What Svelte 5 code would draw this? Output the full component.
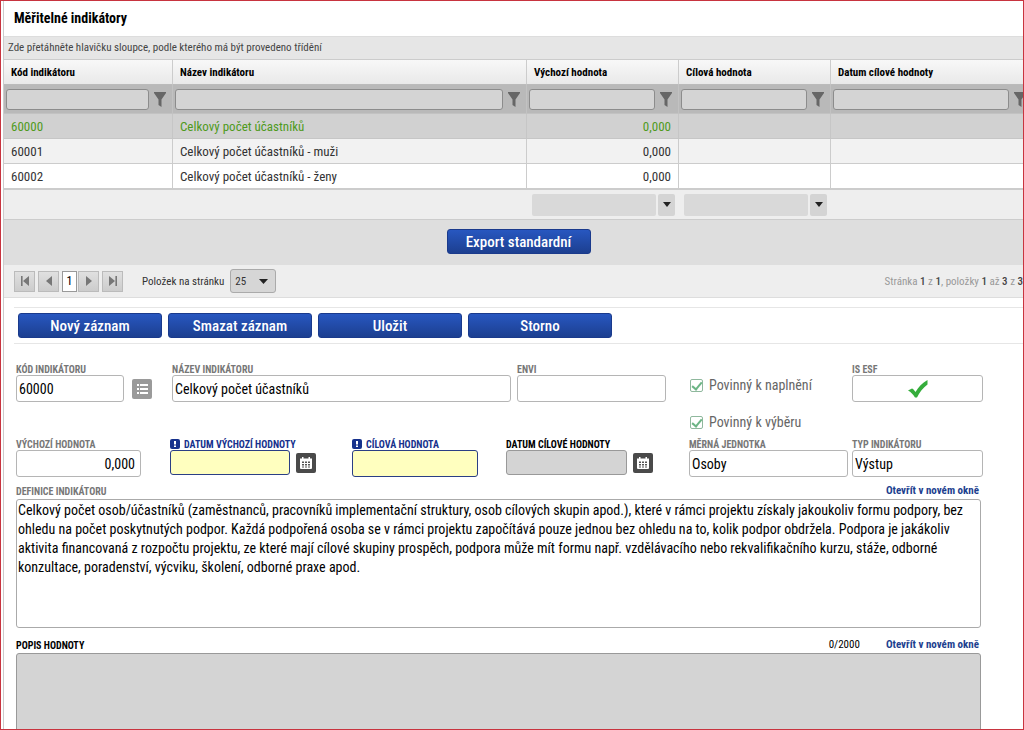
<script lang="ts">
  interface Indicator {
    code: string;
    name: string;
    initial: string;
  }

  const columns = ["Kód indikátoru", "Název indikátoru", "Výchozí hodnota", "Cílová hodnota", "Datum cílové hodnoty"];

  const rows: Indicator[] = [
    { code: "60000", name: "Celkový počet účastníků", initial: "0,000" },
    { code: "60001", name: "Celkový počet účastníků - muži", initial: "0,000" },
    { code: "60002", name: "Celkový počet účastníků - ženy", initial: "0,000" },
  ];

  const actions = ["Nový záznam", "Smazat záznam", "Uložit", "Storno"];

  let selected = "60000";
  let note = "";
  let definition =
    "Celkový počet osob/účastníků (zaměstnanců, pracovníků implementační struktury, osob cílových skupin apod.), které v rámci projektu získaly jakoukoliv formu podpory, bez ohledu na počet poskytnutých podpor. Každá podpořená osoba se v rámci projektu započítává pouze jednou bez ohledu na to, kolik podpor obdržela. Podpora je jakákoliv aktivita financovaná z rozpočtu projektu, ze které mají cílové skupiny prospěch, podpora může mít formu např. vzdělávacího nebo rekvalifikačního kurzu, stáže, odborné konzultace, poradenství, výcviku, školení, odborné praxe apod.";

  $: current = rows.find(r => r.code === selected) ?? rows[0];
</script>

{#snippet calendar()}
  <svg width="12" height="12" viewBox="0 0 12 12" aria-hidden="true">
    <path d="M0 1.500h2V0h1.500v1.500h5V0H10v1.500h2V11q0 1-1 1H1q-1 0-1-1z" fill="#fff" />
    <path d="M2 4.500h2v1.500H2zM5 4.500h2v1.500H5zM8 4.500h2v1.500H8zM2 7h2v1.500H2zM5 7h2v1.500H5zM8 7h2v1.500H8zM2 9.500h2v1H2zM5 9.500h2v1H5zM8 9.500h2v1H8z" fill="#555" />
  </svg>
{/snippet}

{#snippet required()}
  <svg width="10" height="10" viewBox="0 0 10 10" aria-hidden="true">
    <rect width="10" height="10" rx="2" fill="#16318c" />
    <path d="M4 2h2v3.500H4zM4 6.500h2v1.500H4z" fill="#fff" />
  </svg>
{/snippet}

<div class="page">
  <main>
    <h1>Měřitelné indikátory</h1>
    <div class="group-bar">Zde přetáhněte hlavičku sloupce, podle kterého má být provedeno třídění</div>

    <table>
      <colgroup>
        <col class="code" />
        <col />
        <col class="value" />
        <col class="value" />
        <col class="date" />
      </colgroup>
      <thead>
        <tr>
          {#each columns as column}
            <th>{column}</th>
          {/each}
        </tr>
        <tr class="filters">
          {#each columns as column}
            <td>
              <div class="filter">
                <input type="text" aria-label={"Filtr: " + column} />
                <button aria-label={"Filtrovat: " + column}>
                  <svg width="12" height="15" viewBox="0 0 12 15"><path d="M0 0h12v1L7.500 7.500V15l-3-2V7.500L0 1z" fill="#666" /></svg>
                </button>
              </div>
            </td>
          {/each}
        </tr>
      </thead>
      <tbody>
        {#each rows as row}
          <tr class:selected={selected === row.code} on:click={() => selected = row.code}>
            <td>{row.code}</td>
            <td>{row.name}</td>
            <td class="num">{row.initial}</td>
            <td></td>
            <td></td>
          </tr>
        {/each}
      </tbody>
      <tfoot>
        <tr>
          <td></td>
          <td></td>
          {#each ["Výchozí hodnota", "Cílová hodnota"] as name}
            <td>
              <div class="combo">
                <input type="text" aria-label={"Souhrn: " + name} />
                <button aria-label={"Vybrat souhrn: " + name}>
                  <svg width="8" height="5" viewBox="0 0 8 5"><path d="M0 0h8L4 5z" fill="#222" /></svg>
                </button>
              </div>
            </td>
          {/each}
          <td></td>
        </tr>
      </tfoot>
    </table>

    <div class="export"><button class="primary">Export standardní</button></div>

    <div class="pager">
      <button class="nav" aria-label="První stránka">
        <svg width="10" height="10" viewBox="0 0 10 10"><path d="M1 0h1.600v10H1zM9 0v10L3 5z" fill="#777" /></svg>
      </button>
      <button class="nav" aria-label="Předchozí stránka">
        <svg width="10" height="10" viewBox="0 0 10 10"><path d="M8 0v10L2 5z" fill="#777" /></svg>
      </button>
      <button class="number">1</button>
      <button class="nav" aria-label="Další stránka">
        <svg width="10" height="10" viewBox="0 0 10 10"><path d="M2 0v10l6-5z" fill="#777" /></svg>
      </button>
      <button class="nav" aria-label="Poslední stránka">
        <svg width="10" height="10" viewBox="0 0 10 10"><path d="M7.400 0H9v10H7.400zM1 0v10l6-5z" fill="#777" /></svg>
      </button>
      <label for="page-size">Položek na stránku</label>
      <div class="select">
        <select id="page-size">
          <option>25</option>
          <option>50</option>
          <option>100</option>
        </select>
        <svg width="9" height="5" viewBox="0 0 9 5"><path d="M0 0h9L4.500 5z" fill="#222" /></svg>
      </div>
      <p>Stránka <b>1</b> z <b>1</b>, položky <b>1</b> až <b>3</b> z <b>3</b></p>
    </div>

    <div class="toolbar">
      {#each actions as action}
        <button class="primary">{action}</button>
      {/each}
    </div>

    <form on:submit|preventDefault>
      <div class="row first">
        <div class="field">
          <label for="code">Kód indikátoru</label>
          <div class="with-icon wide">
            <input id="code" type="text" value={current.code} />
            <button class="icon list" type="button" aria-label="Vybrat ze seznamu">
              <svg width="11" height="10" viewBox="0 0 11 10"><path d="M0 0h2v2H0zM3 0h8v2H3zM0 4h2v2H0zM3 4h8v2H3zM0 8h2v2H0zM3 8h8v2H3z" fill="#fff" /></svg>
            </button>
          </div>
        </div>
        <div class="field gap">
          <label for="name">Název indikátoru</label>
          <input id="name" type="text" value={current.name} />
        </div>
        <div class="field envi">
          <label for="envi">ENVI</label>
          <input id="envi" type="text" />
        </div>
        <div class="checks">
          <label><input type="checkbox" checked disabled /> Povinný k naplnění</label>
          <label><input type="checkbox" checked disabled /> Povinný k výběru</label>
        </div>
        <div class="field">
          <span class="label">Is ESF</span>
          <div class="flag" role="img" aria-label="Ano">
            <svg width="22" height="20" viewBox="0 0 22 20"><path d="M1 11.500L5 9.500c1.500.5 2.500 2 3.500 3.500C11.500 8 15 4 20.500 1v4.500C16 9 12.500 13 10 18.500H8C6 15.500 4 13 1 11.500z" fill="#35ad3b" /></svg>
          </div>
        </div>
      </div>

      <div class="row second">
        <div class="field initial">
          <label for="initial">Výchozí hodnota</label>
          <input id="initial" class="num" type="text" value={current.initial} />
        </div>
        <div class="field required">
          <label for="initial-date">{@render required()}Datum výchozí hodnoty</label>
          <div class="with-icon">
            <input id="initial-date" type="text" />
            <button class="icon" type="button" aria-label="Vybrat datum výchozí hodnoty">{@render calendar()}</button>
          </div>
        </div>
        <div class="field required target">
          <label for="target">{@render required()}Cílová hodnota</label>
          <input id="target" type="text" />
        </div>
        <div class="field optional">
          <label for="target-date">Datum cílové hodnoty</label>
          <div class="with-icon">
            <input id="target-date" type="text" />
            <button class="icon" type="button" aria-label="Vybrat datum cílové hodnoty">{@render calendar()}</button>
          </div>
        </div>
        <div class="field unit">
          <label for="unit">Měrná jednotka</label>
          <input id="unit" type="text" value="Osoby" />
        </div>
        <div class="field">
          <label for="type">Typ indikátoru</label>
          <input id="type" type="text" value="Výstup" />
        </div>
      </div>

      <div class="area">
        <div class="area-head">
          <label for="definition">Definice indikátoru</label>
          <a href="#definition">Otevřít v novém okně</a>
        </div>
        <textarea id="definition" bind:value={definition}></textarea>
      </div>

      <div class="area optional">
        <div class="area-head">
          <label for="note">Popis hodnoty</label>
          <span>{note.length}/2000</span>
          <a href="#note">Otevřít v novém okně</a>
        </div>
        <textarea id="note" maxlength="2000" bind:value={note}></textarea>
      </div>
    </form>
  </main>
</div>

<style>
  :global(body) {
    background: #fff;
  }

  .page {
    box-sizing: border-box;
    height: 100vh;
    overflow: hidden;
    border: 1px solid #c8343f;
    padding-left: 2px;
    font-family: "Roboto Condensed", Roboto, sans-serif;
    font-size: 14px;
    color: #333;
  }

  .page :global(*) {
    box-sizing: border-box;
  }

  /* the grid runs a little past the right edge of the frame */
  main {
    width: calc(100% + 10px);
    border-left: 1px solid #ccc;
  }

  input, button, select, textarea {
    font: inherit;
    color: #000;
    margin: 0;
    min-width: 0;
  }

  button {
    padding: 0;
    border: none;
    background: none;
    cursor: pointer;
  }

  svg {
    flex: none;
  }

  h1 {
    margin: 0;
    padding: 0 10px;
    font-size: 14px;
    line-height: 35px;
    color: #000;
  }

  .group-bar {
    padding: 0 4px;
    border-top: 1px solid #ddd;
    background: #e6e6e6;
    font-size: 11px;
    line-height: 22px;
    color: #444;
  }

  table {
    width: 100%;
    table-layout: fixed;
    border-collapse: separate;
    border-spacing: 0;
    font-size: 13px;
  }

  .code {
    width: 169px;
  }

  .value {
    width: 152px;
  }

  .date {
    width: 202px;
  }

  th {
    height: 26px;
    padding: 0 7px;
    border-top: 1px solid #ccc;
    border-right: 1px solid #ccc;
    border-bottom: 1px solid #bbb;
    background: linear-gradient(#f8f8f8, #e9e9e9);
    font-size: 11px;
    text-align: left;
    color: #000;
  }

  td {
    height: 25px;
    padding: 0 7px;
    border-right: 1px solid #ccc;
    border-bottom: 1px solid #ccc;
    white-space: nowrap;
  }

  .filters td {
    height: 29px;
    padding: 0 2px;
    border-color: #c2c2c2;
    background: #b9b9b9;
  }

  .filter {
    display: flex;
    align-items: center;
    gap: 5px;
    padding-right: 4px;
  }

  .filter input {
    flex: 1;
    height: 21px;
    border: 1px solid #8c8c8c;
    border-radius: 3px;
    background: #d4d4d4;
  }

  .filter button {
    display: flex;
  }

  tbody tr:nth-child(even) {
    background: #f2f2f2;
  }

  tbody .selected {
    background: #d1d1d1;
    color: #4f9a1c;
  }

  .selected td {
    border-color: #c6c6c6;
  }

  tbody tr:last-child td {
    height: 26px;
    border-bottom: 2px solid #ccc;
  }

  .num {
    text-align: right;
  }

  tfoot td {
    height: 30px;
    padding: 0 4px 0 5px;
    border-right: none;
    background: #eee;
  }

  .combo {
    display: flex;
    gap: 2px;
  }

  .combo input {
    flex: 1;
    height: 22px;
    border: none;
    border-radius: 2px;
    background: #d9d9d9;
  }

  .combo button {
    display: flex;
    align-items: center;
    justify-content: center;
    width: 17px;
    border-radius: 2px;
    background: #d4d4d4;
  }

  .export {
    display: flex;
    justify-content: center;
    padding: 9px 0 11px;
    background: #dedede;
  }

  .primary {
    width: 144px;
    height: 25px;
    border: 1px solid #1a3a8c;
    border-radius: 3px;
    background: linear-gradient(#2857c0, #1c3f90);
    color: #fff;
    font-size: 15px;
    font-weight: 500;
  }

  .pager {
    display: flex;
    align-items: center;
    height: 33px;
    padding: 0 10px;
    border-bottom: 1px solid #ddd;
    background: #eee;
    font-size: 11px;
    white-space: nowrap;
  }

  .nav {
    display: flex;
    align-items: center;
    justify-content: center;
    width: 21px;
    height: 21px;
    margin-right: 3px;
    border: 1px solid #bbb;
    background: linear-gradient(#e0e0e0, #ccc);
  }

  .number {
    width: 15px;
    height: 21px;
    margin-right: 1px;
    border: 1px solid #999;
    background: #fff;
    font-size: 12px;
  }

  .pager label {
    padding: 0 6px 0 16px;
  }

  .select {
    display: flex;
    align-items: center;
    width: 46px;
    height: 24px;
    border: 1px solid #aaa;
    border-radius: 3px;
    background: #d6d6d6;
  }

  .select select {
    width: 100%;
    height: 100%;
    padding: 0 4px;
    border: none;
    appearance: none;
    background: none;
    color: #333;
  }

  .select svg {
    margin-right: 7px;
    pointer-events: none;
  }

  .pager p {
    margin: 0 0 0 auto;
    color: #999;
  }

  .pager b {
    font-weight: 500;
    color: #444;
  }

  .toolbar {
    display: flex;
    gap: 6px;
    margin: 9px 0 0 10px;
    padding: 5px 4px;
    border-top: 1px solid #e6e6e6;
    border-bottom: 1px solid #e6e6e6;
  }

  form {
    padding: 19px 50px 0 12px;
  }

  .row {
    display: grid;
    height: 75px;
  }

  .first {
    grid-template-columns: 156fr 345fr 173fr 162fr 131fr;
  }

  .second {
    grid-template-columns: 154fr 182fr 154fr 183fr 163fr 131fr;
    height: 48px;
  }

  .field label, .field .label, .area-head label {
    display: flex;
    align-items: center;
    gap: 4px;
    height: 12px;
    font-size: 10px;
    font-weight: 700;
    text-transform: uppercase;
    white-space: nowrap;
    color: #777;
  }

  .field input {
    display: block;
    width: 100%;
    height: 27px;
    padding: 0 2px;
    border: 1px solid #b5b5b5;
    border-radius: 3px;
    background: #fff;
  }

  .field .num {
    padding-right: 5px;
  }

  .gap {
    padding-right: 6px;
  }

  .envi {
    padding-right: 24px;
  }

  .initial {
    padding-right: 29px;
  }

  .target {
    padding-right: 28px;
  }

  .unit {
    padding-right: 4px;
  }

  .with-icon {
    display: flex;
    align-items: center;
    gap: 6px;
    padding-right: 36px;
  }

  .wide {
    gap: 8px;
    padding-right: 20px;
  }

  .field .with-icon input {
    flex: 1;
    height: 25px;
  }

  .field .wide input {
    height: 27px;
  }

  .icon {
    display: flex;
    align-items: center;
    justify-content: center;
    width: 20px;
    height: 20px;
    border-radius: 2px;
    background: #4a4a4a;
  }

  .list {
    background: #9a9a9a;
  }

  .field.required label {
    color: #16318c;
  }

  .field.required input {
    border-color: #2b3f85;
    background: #ffffbf;
  }

  .optional input, .optional textarea {
    border-color: #999;
    background: #d4d4d4;
  }

  .field.optional label, .optional .area-head label {
    color: #000;
  }

  .checks {
    display: flex;
    flex-direction: column;
    gap: 17px;
    padding-top: 12px;
    color: #666;
  }

  .checks label {
    display: flex;
    align-items: center;
    gap: 6px;
    height: 20px;
    white-space: nowrap;
  }

  .checks input {
    display: flex;
    justify-content: center;
    width: 13px;
    height: 13px;
    border: 1px solid #8fb89d;
    border-radius: 2px;
    appearance: none;
    background: #fff;
  }

  .checks input:checked::after {
    content: "";
    width: 4px;
    height: 8px;
    border: solid #6cb585;
    border-width: 0 2px 2px 0;
    transform: rotate(40deg);
  }

  .flag {
    display: flex;
    align-items: center;
    justify-content: center;
    height: 27px;
    border: 1px solid #b5b5b5;
    border-radius: 3px;
  }

  .area {
    padding-right: 2px;
  }

  .area-head {
    display: flex;
    align-items: flex-start;
    height: 13px;
    font-size: 11px;
    line-height: 10px;
    color: #000;
  }

  .area-head label {
    margin-right: auto;
  }

  .area-head a {
    padding: 0 2px 0 26px;
    font-weight: 700;
    color: #1d3f8f;
    text-decoration: none;
  }

  textarea {
    display: block;
    width: 100%;
    height: 129px;
    margin-bottom: 12px;
    padding: 1px;
    border: 1px solid #aaa;
    border-radius: 3px;
    resize: none;
    line-height: 19px;
  }
</style>
